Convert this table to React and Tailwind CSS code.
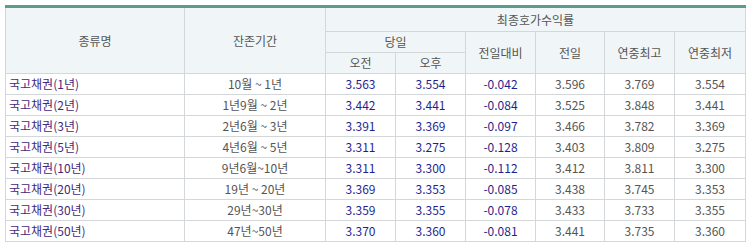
const rows = [
  ['국고채권(1년)', '10월 ~ 1년', '3.563', '3.554', '-0.042', '3.596', '3.769', '3.554'],
  ['국고채권(2년)', '1년9월 ~ 2년', '3.442', '3.441', '-0.084', '3.525', '3.848', '3.441'],
  ['국고채권(3년)', '2년6월 ~ 3년', '3.391', '3.369', '-0.097', '3.466', '3.782', '3.369'],
  ['국고채권(5년)', '4년6월 ~ 5년', '3.311', '3.275', '-0.128', '3.403', '3.809', '3.275'],
  ['국고채권(10년)', '9년6월~10년', '3.311', '3.300', '-0.112', '3.412', '3.811', '3.300'],
  ['국고채권(20년)', '19년 ~ 20년', '3.369', '3.353', '-0.085', '3.438', '3.745', '3.353'],
  ['국고채권(30년)', '29년~30년', '3.359', '3.355', '-0.078', '3.433', '3.733', '3.355'],
  ['국고채권(50년)', '47년~50년', '3.370', '3.360', '-0.081', '3.441', '3.735', '3.360'],
]

const th = 'border border-[#d3d7d9] bg-[#f0f5f7] font-normal text-[#555] p-0'
const td = 'border border-[#d3d7d9] p-0 h-[21px] text-center'

export default function App() {
  return (
    <div className="bg-white w-[747px] h-[244px] pt-[5px] pl-[5px]" style={{ fontFamily: '"Noto Sans CJK KR", "Liberation Sans", sans-serif' }}>
      <table className="table-fixed border-collapse w-[740px] text-[12px] leading-none border-t-[3px] border-t-[#5e9a88]">
        <colgroup>
          <col className="w-[179px]" />
          <col className="w-[141px]" />
          <col className="w-[70px]" />
          <col className="w-[70px]" />
          <col className="w-[70px]" />
          <col className="w-[69px]" />
          <col className="w-[70px]" />
          <col className="w-[71px]" />
        </colgroup>
        <thead>
          <tr className="h-[25px]">
            <th rowSpan={3} className={th}>종류명</th>
            <th rowSpan={3} className={th}>잔존기간</th>
            <th colSpan={6} className={th}>최종호가수익률</th>
          </tr>
          <tr className="h-[21px]">
            <th colSpan={2} className={th}>당일</th>
            <th rowSpan={2} className={th}>전일대비</th>
            <th rowSpan={2} className={th}>전일</th>
            <th rowSpan={2} className={th}>연중최고</th>
            <th rowSpan={2} className={th}>연중최저</th>
          </tr>
          <tr className="h-[21px]">
            <th className={th}>오전</th>
            <th className={th}>오후</th>
          </tr>
        </thead>
        <tbody>
          {rows.map(r => (
            <tr key={r[0]}>
              <td className="border border-[#d3d7d9] p-0 h-[21px] pl-[3px] text-left text-[#45287a]">{r[0]}</td>
              <td className={`${td} text-[#555]`}>{r[1]}</td>
              <td className={`${td} text-[#1f1f8f]`}>{r[2]}</td>
              <td className={`${td} text-[#1f1f8f]`}>{r[3]}</td>
              <td className={`${td} text-[#1f1f8f]`}>{r[4]}</td>
              <td className={`${td} text-[#555]`}>{r[5]}</td>
              <td className={`${td} text-[#555]`}>{r[6]}</td>
              <td className={`${td} text-[#555]`}>{r[7]}</td>
            </tr>
          ))}
        </tbody>
      </table>
    </div>
  )
}
